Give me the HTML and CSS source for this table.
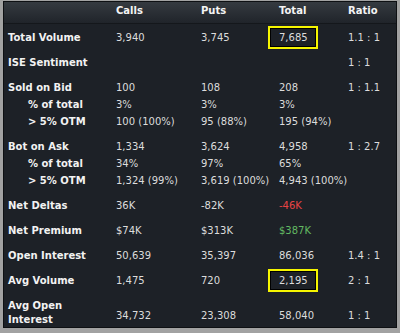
FILE: index.html
```html
<!DOCTYPE html>
<html>
<head>
<meta charset="utf-8">
<link rel="stylesheet" href="styles.css">
</head>
<body>
<div class="panel">
  <div class="row head">
    <span></span><span>Calls</span><span>Puts</span><span>Total</span><span>Ratio</span>
  </div>
  <div class="list">
    <div class="group">
      <div class="row"><span class="lbl">Total Volume</span><span>3,940</span><span>3,745</span><span class="hl">7,685</span><span>1.1 : 1</span></div>
    </div>
    <div class="group">
      <div class="row"><span class="lbl">ISE Sentiment</span><span></span><span></span><span></span><span>1 : 1</span></div>
    </div>
    <div class="group">
      <div class="row"><span class="lbl">Sold on Bid</span><span>100</span><span>108</span><span>208</span><span>1 : 1.1</span></div>
      <div class="row"><span class="lbl sub">% of total</span><span>3%</span><span>3%</span><span>3%</span><span></span></div>
      <div class="row"><span class="lbl sub">&gt; 5% OTM</span><span>100 (100%)</span><span>95 (88%)</span><span>195 (94%)</span><span></span></div>
    </div>
    <div class="group">
      <div class="row"><span class="lbl">Bot on Ask</span><span>1,334</span><span>3,624</span><span>4,958</span><span>1 : 2.7</span></div>
      <div class="row"><span class="lbl sub">% of total</span><span>34%</span><span>97%</span><span>65%</span><span></span></div>
      <div class="row"><span class="lbl sub">&gt; 5% OTM</span><span>1,324 (99%)</span><span>3,619 (100%)</span><span>4,943 (100%)</span><span></span></div>
    </div>
    <div class="group">
      <div class="row"><span class="lbl">Net Deltas</span><span>36K</span><span>-82K</span><span class="neg">-46K</span><span></span></div>
    </div>
    <div class="group">
      <div class="row"><span class="lbl">Net Premium</span><span>$74K</span><span>$313K</span><span class="pos">$387K</span><span></span></div>
    </div>
    <div class="group">
      <div class="row"><span class="lbl">Open Interest</span><span>50,639</span><span>35,397</span><span>86,036</span><span>1.4 : 1</span></div>
    </div>
    <div class="group">
      <div class="row"><span class="lbl">Avg Volume</span><span>1,475</span><span>720</span><span class="hl">2,195</span><span>2 : 1</span></div>
    </div>
    <div class="group last">
      <div class="row wrap"><span class="lbl">Avg Open<br>Interest</span><span class="v">34,732</span><span class="v">23,308</span><span class="v">58,040</span><span class="v">1 : 1</span></div>
    </div>
  </div>
</div>
</body>
</html>
```

FILE: styles.css
```css
html, body {
  margin: 0;
  padding: 0;
}
body {
  background: #a2a2a2;
  padding: 1px 3px 5px 3px;
  width: 394px;
  height: 327px;
  font-family: "DejaVu Sans", "Liberation Sans", sans-serif;
  font-size: 10px;
}
.panel {
  box-sizing: border-box;
  height: 327px;
  background: #1d2127;
  border: 1px solid #0e1013;
  overflow: hidden;
  color: #dcdcdc;
}
.row {
  display: grid;
  grid-template-columns: 108px 85px 78px 69px 1fr;
  line-height: 17px;
  padding-left: 4px;
  white-space: nowrap;
}
.head {
  line-height: 18px;
  height: 18px;
  padding-bottom: 3px;
  background: linear-gradient(#353a40, #20242a);
  border-bottom: 1px solid #14171b;
  font-weight: bold;
  color: #f4f4f4;
}
.list {
  padding-top: 1px;
}
.group {
  padding: 4px 0;
}
.lbl {
  font-weight: bold;
  color: #f2f2f2;
}
.sub {
  padding-left: 20px;
}
.neg {
  color: #e84444;
}
.pos {
  color: #62b862;
}
.hl {
  position: relative;
}
.hl::before {
  content: "";
  position: absolute;
  left: -11px;
  top: -3px;
  width: 46px;
  height: 19px;
  border: 2px solid #f5f500;
  box-shadow: inset 0 0 0 1px #000;
}
.last {
  padding-top: 6px;
}
.wrap .lbl {
  line-height: 14px;
}
.wrap .v {
  align-self: center;
  padding-top: 4px;
}
```
